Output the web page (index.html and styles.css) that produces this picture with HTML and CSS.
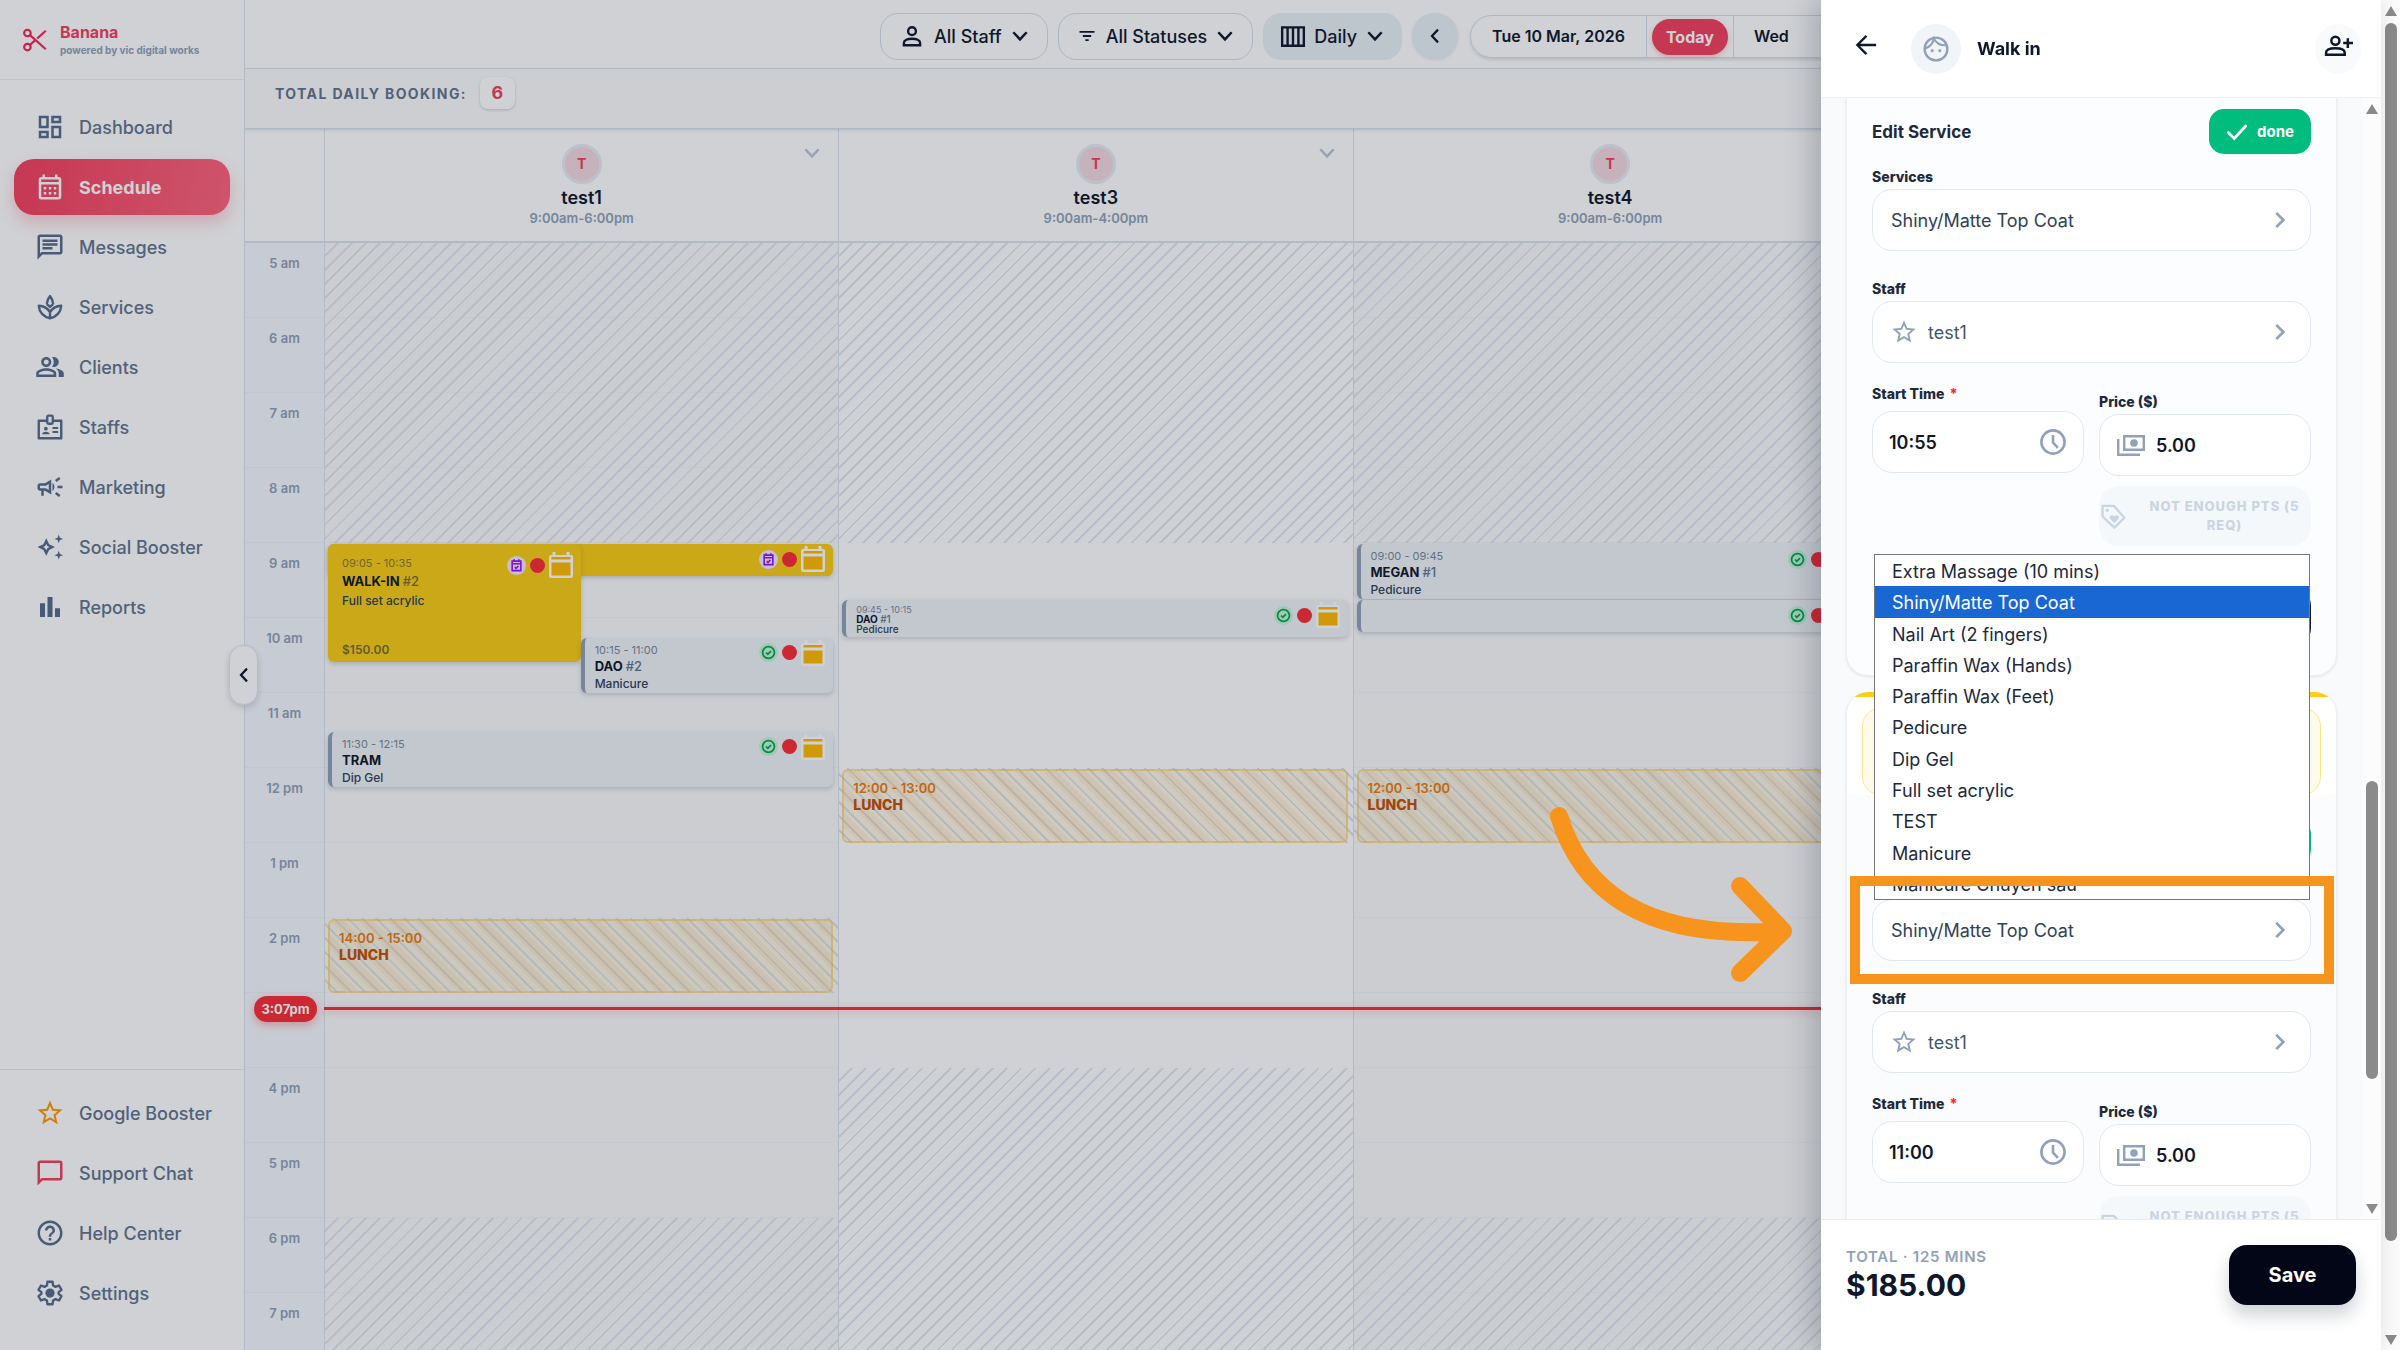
FILE: index.html
```html
<!DOCTYPE html>
<html lang="en">
<head>
  <meta charset="UTF-8" />
  <meta name="viewport" content="width=device-width, initial-scale=1.0" />
  <title>Banana - Schedule</title>
  <link rel="stylesheet" href="styles.css">
</head>
<body>

<!-- ICONS -->
<svg class="sprite" aria-hidden="true">
  <symbol id="i-scissors" viewBox="0 0 24 24"><g fill="none" stroke="currentColor" stroke-width="2"><circle cx="5" cy="5.500" r="3"/><circle cx="5" cy="18.500" r="3"/><path d="M7.400 7.500 22 20.500M7.400 16.500l4.400-3.900M14 10.600l8-7.100"/></g></symbol>
  <symbol id="i-dashboard" viewBox="0 0 24 24"><path d="M19 5v2h-4V5h4M9 5v6H5V5h4m10 8v6h-4v-6h4M9 17v2H5v-2h4M21 3h-8v6h8V3zM11 3H3v10h8V3zm10 8h-8v10h8V11zm-10 4H3v6h8v-6z"/></symbol>
  <symbol id="i-calendar" viewBox="0 0 24 24"><path d="M19 4h-1V2h-2v2H8V2H6v2H5c-1.110 0-1.990.9-1.990 2L3 20a2 2 0 0 0 2 2h14c1.100 0 2-.9 2-2V6c0-1.100-.9-2-2-2zm0 16H5V10h14v10zm0-12H5V6h14v2zM9 14H7v-2h2v2zm4 0h-2v-2h2v2zm4 0h-2v-2h2v2zm-8 4H7v-2h2v2zm4 0h-2v-2h2v2zm4 0h-2v-2h2v2z"/></symbol>
  <symbol id="i-messages" viewBox="0 0 24 24"><path d="M4 4h16v12H5.170L4 17.170V4m0-2c-1.100 0-1.990.9-1.990 2L2 22l4-4h14c1.100 0 2-.9 2-2V4c0-1.100-.9-2-2-2H4zm2 10h8v2H6v-2zm0-3h12v2H6V9zm0-3h12v2H6V6z"/></symbol>
  <symbol id="i-spa" viewBox="0 0 24 24"><g fill="none" stroke="currentColor" stroke-width="1.900" stroke-linejoin="round"><path d="M9.400 9.800C9.600 7.200 10.500 5 12 3.300c1.500 1.700 2.400 3.900 2.600 6.500M12 21c5.200-1 8.700-5 9-10-4 .2-7.200 2-9 5.200C10.200 13 7 11.200 3 11c.3 5 3.800 9 9 10zM12 21v-5M9.400 9.800c1 .6 1.800 1.300 2.600 2.100.8-.8 1.600-1.500 2.600-2.100"/></g></symbol>
  <symbol id="i-clients" viewBox="0 0 24 24"><path d="M16.670 13.130C18.040 14.060 19 15.320 19 17v3h4v-3c0-2.180-3.570-3.470-6.330-3.870zM15 12c2.210 0 4-1.790 4-4s-1.790-4-4-4c-.47 0-.91.1-1.330.24C14.500 5.270 15 6.580 15 8s-.5 2.730-1.330 3.760c.42.14.86.24 1.330.24zM9 12c2.210 0 4-1.790 4-4s-1.790-4-4-4-4 1.790-4 4 1.790 4 4 4zm0-6c1.100 0 2 .9 2 2s-.9 2-2 2-2-.9-2-2 .9-2 2-2zm0 7c-2.670 0-8 1.340-8 4v3h16v-3c0-2.660-5.330-4-8-4zm6 5H3v-.99C3.200 16.290 6.300 15 9 15s5.800 1.290 6 2v1z"/></symbol>
  <symbol id="i-badge" viewBox="0 0 24 24"><g fill="none" stroke="currentColor" stroke-width="1.900"><path d="M9.500 7H3v14h18V7h-6.500" stroke-linejoin="round"/><rect x="9.800" y="2.900" width="4.400" height="6.500" rx="1"/></g><circle cx="8.700" cy="13.300" r="1.500"/><path d="M5.700 17.800c0-1.400 1.200-2.100 3-2.100s3 .7 3 2.100zM14 12h4.500v1.500H14zM14 15.200h4.500v1.500H14z"/></symbol>
  <symbol id="i-campaign" viewBox="0 0 24 24"><path d="M18 11v2h4v-2h-4zm-2 6.610c.96.71 2.210 1.650 3.200 2.390.4-.53.8-1.070 1.200-1.600-.99-.74-2.240-1.680-3.200-2.400-.4.54-.8 1.080-1.200 1.610zM20.400 5.600c-.4-.53-.8-1.070-1.200-1.600-.99.74-2.240 1.680-3.200 2.400.4.530.8 1.070 1.200 1.600.96-.72 2.210-1.650 3.200-2.400zM4 9c-1.100 0-2 .9-2 2v2c0 1.100.9 2 2 2h1v4h2v-4h1l5 3V6L8 9H4zm5.030 1.710L11 9.530v4.940l-1.970-1.180-.48-.29H4v-2h4.550l.48-.29zM15.500 12c0-1.330-.58-2.530-1.500-3.350v6.690c.92-.81 1.500-2.010 1.500-3.340z"/></symbol>
  <symbol id="i-sparkle" viewBox="0 0 24 24"><path fill-rule="evenodd" d="M9 5l2.300 4.700L16 12l-4.700 2.300L9 19l-2.300-4.700L2 12l4.700-2.300zM9 9.500l-.9 1.600L6.500 12l1.600.9.9 1.600.9-1.600 1.600-.9-1.600-.9z"/><path d="M19 2l.9 2.600 2.600.9-2.600.9L19 9l-.9-2.600-2.600-.9 2.600-.9zM19 15l.9 2.600 2.600.9-2.600.9L19 22l-.9-2.600-2.600-.9 2.600-.9z"/></symbol>
  <symbol id="i-bars" viewBox="0 0 24 24"><path d="M4 9h4v11H4zM10 4h4v16h-4zM16 13h4v7h-4z"/></symbol>
  <symbol id="i-star" viewBox="0 0 24 24"><path d="M22 9.240l-7.190-.62L12 2 9.190 8.630 2 9.240l5.460 4.730L5.820 21 12 17.270 18.180 21l-1.630-7.030L22 9.240zM12 15.400l-3.760 2.270 1-4.280-3.320-2.880 4.380-.38L12 6.100l1.710 4.040 4.380.38-3.320 2.880 1 4.280L12 15.400z"/></symbol>
  <symbol id="i-bubble" viewBox="0 0 24 24"><path d="M20 2H4c-1.100 0-2 .9-2 2v18l4-4h14c1.100 0 2-.9 2-2V4c0-1.100-.9-2-2-2zm0 14H5.200L4 17.200V4h16v12z"/></symbol>
  <symbol id="i-help" viewBox="0 0 24 24"><path d="M11 18h2v-2h-2v2zm1-16C6.480 2 2 6.480 2 12s4.480 10 10 10 10-4.480 10-10S17.520 2 12 2zm0 18c-4.410 0-8-3.590-8-8s3.590-8 8-8 8 3.590 8 8-3.590 8-8 8zm0-14c-2.210 0-4 1.790-4 4h2c0-1.100.9-2 2-2s2 .9 2 2c0 2-3 1.750-3 5h2c0-2.250 3-2.500 3-5 0-2.210-1.790-4-4-4z"/></symbol>
  <symbol id="i-gear" viewBox="0 0 24 24"><path fill="none" stroke="currentColor" stroke-width="1.900" stroke-linejoin="round" d="M10 3h4l.5 3 1.900 1.100 2.800-1.100 2 3.500-2.300 1.800v1.400l2.300 1.800-2 3.500-2.800-1.100-1.900 1.100-.5 3h-4l-.5-3-1.900-1.100L4.800 18l-2-3.500 2.300-1.800v-1.400L2.800 9.500l2-3.500 2.800 1.100L9.500 6z"/><circle cx="12" cy="12" r="3.700"/></symbol>
  <symbol id="i-person" viewBox="0 0 24 24"><g fill="none" stroke="currentColor" stroke-width="2.200"><circle cx="12" cy="7.500" r="3.600"/><path d="M4.500 20.500v-2c0-2.600 3.500-4 7.500-4s7.500 1.400 7.500 4v2z"/></g></symbol>
  <symbol id="i-person-add" viewBox="0 0 28 24"><g fill="none" stroke="currentColor" stroke-width="2.400"><circle cx="11" cy="7" r="3.900"/><path d="M2 20.500v-2c0-2.800 4-4.300 9-4.300s9 1.500 9 4.300v2zM23 4.500v9.500M18.500 9.200h9.500"/></g></symbol>
  <symbol id="i-filter" viewBox="0 0 24 24"><path fill="none" stroke="currentColor" stroke-width="2.200" d="M3 7h18M7 12h10M10 17h4"/></symbol>
  <symbol id="i-columns" viewBox="0 0 24 24"><path fill="none" stroke="currentColor" stroke-width="2.200" d="M2 4h20v17H2zM7 4v17M12 4v17M17 4v17"/></symbol>
  <symbol id="i-down" viewBox="0 0 24 24"><path fill="none" stroke="currentColor" stroke-width="3" d="M4 7.500l8 8.500 8-8.500"/></symbol>
  <symbol id="i-left" viewBox="0 0 24 24"><path fill="none" stroke="currentColor" stroke-width="3" d="M16 3.500L8 12l8 8.500"/></symbol>
  <symbol id="i-right" viewBox="0 0 24 24"><path fill="none" stroke="currentColor" stroke-width="3.200" d="M7.500 3.500L16 12l-8.500 8.500"/></symbol>
  <symbol id="i-back" viewBox="0 0 24 24"><path fill="none" stroke="currentColor" stroke-width="2.500" d="M23 12H3M12.500 2L2.500 12l10 10"/></symbol>
  <symbol id="i-face" viewBox="0 0 24 24"><circle cx="12" cy="12" r="10.500" fill="none" stroke="currentColor" stroke-width="2.200"/><path fill="none" stroke="currentColor" stroke-width="2" d="M2 11.500C6.500 10 9 7 10 2.500c2.500 4.500 6.500 6.500 12 6"/><circle cx="8.500" cy="13.500" r="1.400"/><circle cx="15.500" cy="13.500" r="1.400"/></symbol>
  <symbol id="i-check" viewBox="0 0 24 24"><path fill="none" stroke="currentColor" stroke-width="3" stroke-linecap="round" d="M2.500 12.500l6.500 6.500L21.500 5.500"/></symbol>
  <symbol id="i-clock" viewBox="0 0 24 24"><path fill="none" stroke="currentColor" stroke-width="2.400" d="M12 1.300a10.700 10.700 0 1 0 0 21.400 10.700 10.700 0 0 0 0-21.400zM12 5.500V12.500l4.500 5"/></symbol>
  <symbol id="i-money" viewBox="0 0 28 24"><path fill="none" stroke="currentColor" stroke-width="2.400" d="M1.200 6v15.800H23M7.200 3.200h19.600v13.600H7.200z"/><circle cx="17" cy="10" r="3.800"/><path d="M6 2h4.500L6 6.500zM28 2h-4.500L28 6.500zM6 18h4.500L6 13.500zM28 18h-4.500l4.500-4.500z"/></symbol>
  <symbol id="i-tag" viewBox="0 0 24 24"><path fill="none" stroke="currentColor" stroke-width="2.200" stroke-linejoin="round" d="M1.500 1.800h10.800l10.200 11.400-9.700 9.500L1.500 12z"/><circle cx="6" cy="6" r="1.700"/><path d="M12.800 18.500l-4-4.200c-1.800-2.200 1.700-5 4-2.400 2.300-2.600 5.800.2 4 2.400z"/></symbol>
  <symbol id="i-booked" viewBox="0 0 24 24"><circle cx="12" cy="12" r="12" fill="#f3e8ff"/><path fill="none" stroke="#9810fa" stroke-width="2" d="M6.500 6.500h11v12h-11zM6.500 9.800h11M9 4v3M15 4v3M9.800 14l1.600 1.600 3-3"/></symbol>
  <symbol id="i-confirmed" viewBox="0 0 24 24"><circle cx="12" cy="12" r="12" fill="#c6f6d8"/><g fill="none" stroke="#00a651" stroke-width="2.200"><circle cx="12" cy="12" r="7.500"/><path d="M8.800 12l2.300 2.300 4-4"/></g></symbol>
  <symbol id="i-day" viewBox="0 0 24 26"><path fill="#fff" d="M3.500 0h3v3h11V0h3v3H22a2 2 0 0 1 2 2v19a2 2 0 0 1-2 2H2a2 2 0 0 1-2-2V5a2 2 0 0 1 2-2h1.500z"/><path fill="#ffb900" d="M2.500 5h19v2.500h-19zM2.500 10.500h19V23.500h-19z"/></symbol>
</svg>

<div class="app">

  <!-- SIDEBAR -->
  <aside class="sidebar">
    <div class="brand">
      <svg class="brand-icon"><use href="#i-scissors"/></svg>
      <div>
        <div class="brand-name">Banana</div>
        <div class="brand-sub">powered by vic digital works</div>
      </div>
    </div>
    <nav class="nav">
      <a href="#"><svg><use href="#i-dashboard"/></svg>Dashboard</a>
      <a href="#" class="active"><svg><use href="#i-calendar"/></svg>Schedule</a>
      <a href="#"><svg><use href="#i-messages"/></svg>Messages</a>
      <a href="#"><svg><use href="#i-spa"/></svg>Services</a>
      <a href="#"><svg><use href="#i-clients"/></svg>Clients</a>
      <a href="#"><svg><use href="#i-badge"/></svg>Staffs</a>
      <a href="#"><svg><use href="#i-campaign"/></svg>Marketing</a>
      <a href="#"><svg><use href="#i-sparkle"/></svg>Social Booster</a>
      <a href="#"><svg><use href="#i-bars"/></svg>Reports</a>
    </nav>
    <nav class="nav nav-bottom">
      <a href="#"><svg class="amber"><use href="#i-star"/></svg>Google Booster</a>
      <a href="#"><svg class="rose"><use href="#i-bubble"/></svg>Support Chat</a>
      <a href="#"><svg><use href="#i-help"/></svg>Help Center</a>
      <a href="#"><svg><use href="#i-gear"/></svg>Settings</a>
    </nav>
    <button class="collapse" aria-label="Collapse menu"><svg><use href="#i-left"/></svg></button>
  </aside>

  <!-- SCHEDULE -->
  <main class="main">
    <div class="topbar">
      <button class="filter"><svg class="ic"><use href="#i-person"/></svg>All Staff<svg class="caret"><use href="#i-down"/></svg></button>
      <button class="filter"><svg class="ic-sm"><use href="#i-filter"/></svg>All Statuses<svg class="caret"><use href="#i-down"/></svg></button>
      <button class="filter filled"><svg class="ic-lg"><use href="#i-columns"/></svg>Daily<svg class="caret"><use href="#i-down"/></svg></button>
      <button class="prev" aria-label="Previous day"><svg><use href="#i-left"/></svg></button>
      <div class="dates">
        <button class="date">Tue 10 Mar, 2026</button>
        <div class="today-wrap"><button class="today">Today</button></div>
        <button class="weekday">Wed</button>
      </div>
    </div>

    <div class="totals">
      <span>TOTAL DAILY BOOKING:</span>
      <strong>6</strong>
    </div>

    <div class="staff-head">
      <div></div>
      <div class="staff"><span class="avatar">T</span><b>test1</b><small>9:00am-6:00pm</small><svg><use href="#i-down"/></svg></div>
      <div class="staff"><span class="avatar">T</span><b>test3</b><small>9:00am-4:00pm</small><svg><use href="#i-down"/></svg></div>
      <div class="staff"><span class="avatar">T</span><b>test4</b><small>9:00am-6:00pm</small><svg><use href="#i-down"/></svg></div>
      <div class="staff"></div>
    </div>

    <div class="calendar">
      <div class="hours">
        <span>5 am</span><span>6 am</span><span>7 am</span><span>8 am</span><span>9 am</span>
        <span>10 am</span><span>11 am</span><span>12 pm</span><span>1 pm</span><span>2 pm</span>
        <span></span><span>4 pm</span><span>5 pm</span><span>6 pm</span><span>7 pm</span>
      </div>

      <!-- every grid row is 5 minutes, row 1 = 5:00 -->
      <div class="day">
        <div class="closed" style="grid-row: 1 / 49"></div>
        <div class="closed" style="grid-row: 157 / 181"></div>
        <div class="break" style="grid-row: 109 / 121"></div>
        <article class="event booked wide" style="grid-row: 49 / 52">
          <div class="flags"><svg class="badge"><use href="#i-booked"/></svg><i></i><svg class="cal"><use href="#i-day"/></svg></div>
        </article>
        <article class="event booked tall lane-1" style="grid-row: 49 / 68">
          <time>09:05 - 10:35</time>
          <h4>WALK-IN <span>#2</span></h4>
          <p>Full set acrylic</p>
          <footer>$150.00</footer>
          <div class="flags"><svg class="badge"><use href="#i-booked"/></svg><i></i><svg class="cal"><use href="#i-day"/></svg></div>
        </article>
        <article class="event lane-2" style="grid-row: 64 / 73">
          <time>10:15 - 11:00</time>
          <h4>DAO <span>#2</span></h4>
          <p>Manicure</p>
          <div class="flags"><svg class="badge"><use href="#i-confirmed"/></svg><i></i><svg class="cal"><use href="#i-day"/></svg></div>
        </article>
        <article class="event wide" style="grid-row: 79 / 88">
          <time>11:30 - 12:15</time>
          <h4>TRAM</h4>
          <p>Dip Gel</p>
          <div class="flags"><svg class="badge"><use href="#i-confirmed"/></svg><i></i><svg class="cal"><use href="#i-day"/></svg></div>
        </article>
        <article class="lunch" style="grid-row: 109 / 121"><time>14:00 - 15:00</time><b>LUNCH</b></article>
      </div>

      <div class="day">
        <div class="closed" style="grid-row: 1 / 49"></div>
        <div class="closed" style="grid-row: 133 / 181"></div>
        <div class="break" style="grid-row: 85 / 97"></div>
        <article class="event wide compact" style="grid-row: 58 / 64">
          <time>09:45 - 10:15</time>
          <h4>DAO <span>#1</span></h4>
          <p>Pedicure</p>
          <div class="flags"><svg class="badge"><use href="#i-confirmed"/></svg><i></i><svg class="cal"><use href="#i-day"/></svg></div>
        </article>
        <article class="lunch" style="grid-row: 85 / 97"><time>12:00 - 13:00</time><b>LUNCH</b></article>
      </div>

      <div class="day">
        <div class="closed" style="grid-row: 1 / 49"></div>
        <div class="closed" style="grid-row: 157 / 181"></div>
        <div class="break" style="grid-row: 85 / 97"></div>
        <article class="event wide" style="grid-row: 49 / 58">
          <time>09:00 - 09:45</time>
          <h4>MEGAN <span>#1</span></h4>
          <p>Pedicure</p>
          <div class="flags"><svg class="badge"><use href="#i-confirmed"/></svg><i></i><svg class="cal"><use href="#i-day"/></svg></div>
        </article>
        <article class="event wide" style="grid-row: 58 / 61">
          <div class="flags"><svg class="badge"><use href="#i-confirmed"/></svg><i></i><svg class="cal"><use href="#i-day"/></svg></div>
        </article>
        <article class="lunch" style="grid-row: 85 / 97"><time>12:00 - 13:00</time><b>LUNCH</b></article>
      </div>

      <div class="day"></div>

      <div class="now"><span>3:07pm</span></div>
    </div>
  </main>

  <div class="scrollbar page-scroll"><span class="up"></span><span class="thumb"></span><span class="down"></span></div>
</div>

<div class="overlay"></div>

<!-- BOOKING PANEL -->
<section class="panel">
  <header class="panel-head">
    <button class="back" aria-label="Back"><svg><use href="#i-back"/></svg></button>
    <span class="face"><svg><use href="#i-face"/></svg></span>
    <h3>Walk in</h3>
    <button class="add-client" aria-label="Add client"><svg><use href="#i-person-add"/></svg></button>
  </header>

  <div class="panel-body">
    <div class="panel-list">
      <form class="card card-first">
        <div class="edit">
          <div class="card-top"><h4>Edit Service</h4><button type="button" class="done"><svg><use href="#i-check"/></svg>done</button></div>
          <div class="field">
            <label for="service1">Services</label>
            <div class="control"><select id="service1"><option>Shiny/Matte Top Coat</option></select><svg class="go"><use href="#i-right"/></svg></div>
          </div>
          <div class="field">
            <label for="staff1">Staff</label>
            <div class="control muted"><svg class="lead"><use href="#i-star"/></svg><select id="staff1"><option>test1</option></select><svg class="go"><use href="#i-right"/></svg></div>
          </div>
          <div class="pair">
            <div class="field start">
              <label for="time1">Start Time <em>*</em></label>
              <div class="control bold"><input id="time1" type="text" value="10:55"><svg class="clock"><use href="#i-clock"/></svg></div>
            </div>
            <div class="field price">
              <label for="price1">Price ($)</label>
              <div class="control bold"><svg class="money"><use href="#i-money"/></svg><input id="price1" type="text" value="5.00"></div>
              <button type="button" class="points" disabled><svg><use href="#i-tag"/></svg><span>NOT ENOUGH PTS (5 REQ)</span></button>
            </div>
          </div>
          <button type="button" class="add-more" aria-label="Add service"></button>
        </div>
      </form>

      <form class="card card-second">
        <div class="notice"></div>
        <div class="edit">
          <div class="card-top"><h4></h4><button type="button" class="done" aria-label="done"></button></div>
          <div class="field service-again">
            <div class="control"><select id="service2" aria-label="Services"><option>Shiny/Matte Top Coat</option></select><svg class="go"><use href="#i-right"/></svg></div>
          </div>
          <div class="field">
            <label for="staff2">Staff</label>
            <div class="control muted"><svg class="lead"><use href="#i-star"/></svg><select id="staff2"><option>test1</option></select><svg class="go"><use href="#i-right"/></svg></div>
          </div>
          <div class="pair">
            <div class="field start">
              <label for="time2">Start Time <em>*</em></label>
              <div class="control bold"><input id="time2" type="text" value="11:00"><svg class="clock"><use href="#i-clock"/></svg></div>
            </div>
            <div class="field price">
              <label for="price2">Price ($)</label>
              <div class="control bold"><svg class="money"><use href="#i-money"/></svg><input id="price2" type="text" value="5.00"></div>
              <button type="button" class="points" disabled><svg><use href="#i-tag"/></svg><span>NOT ENOUGH PTS (5 REQ)</span></button>
            </div>
          </div>
        </div>
      </form>
    </div>
    <div class="scrollbar body-scroll"><span class="up"></span><span class="thumb"></span><span class="down"></span></div>

    <!-- open service list -->
    <ul class="options" role="listbox" aria-label="Services">
      <li role="option">Extra Massage (10 mins)</li>
      <li role="option" aria-selected="true">Shiny/Matte Top Coat</li>
      <li role="option">Nail Art (2 fingers)</li>
      <li role="option">Paraffin Wax (Hands)</li>
      <li role="option">Paraffin Wax (Feet)</li>
      <li role="option">Pedicure</li>
      <li role="option">Dip Gel</li>
      <li role="option">Full set acrylic</li>
      <li role="option">TEST</li>
      <li role="option">Manicure</li>
      <li role="option">Manicure Chuyên sâu</li>
    </ul>
    <div class="highlight"></div>
  </div>

  <footer class="panel-foot">
    <div>
      <div class="total-label">TOTAL · 125 MINS</div>
      <div class="total">$185.00</div>
    </div>
    <button class="save">Save</button>
  </footer>

  <svg class="pointer" viewBox="0 0 260 190"><path d="M18 23C40 95 100 148 242 138M199 93l43 45-43 42"/></svg>
</section>

</body>
</html>
```
FILE: styles.css
```css
* {
  box-sizing: border-box;
}
body {
  margin: 0;
  height: 100vh;
  overflow: hidden;
  font-family: Inter, "Noto Sans", sans-serif;
  font-size: 18px;
  color: #0f172b;
  background: #fff;
}
h3, h4, p, ul {
  margin: 0;
  padding: 0;
}
button, input, select {
  font: inherit;
  color: inherit;
  border: 0;
  background: none;
  padding: 0;
}
svg {
  fill: currentColor;
  flex: none;
  overflow: visible;
}
.sprite {
  position: absolute;
  width: 0;
  height: 0;
}
.app {
  display: flex;
  height: 100vh;
}

/* sidebar */
.sidebar {
  position: relative;
  z-index: 3;
  flex: 0 0 245px;
  display: flex;
  flex-direction: column;
  border-right: 1px solid #dbe3ed;
  background: #fff;
}
.brand {
  display: flex;
  align-items: center;
  gap: 12px;
  height: 80px;
  padding-left: 22px;
  border-bottom: 1px solid #e6edf5;
}
.brand-icon { width: 26px; height: 28px; color: #ff2056; }
.brand-name {
  font-size: 16px;
  line-height: 20px;
  font-weight: 700;
  color: #f43f5e;
}
.brand-sub {
  font-size: 10px;
  line-height: 16px;
  font-weight: 700;
  color: #90a1b9;
}
.nav {
  display: flex;
  flex-direction: column;
  gap: 4px;
  padding: 19px 14px;
}
.nav a {
  display: flex;
  align-items: center;
  gap: 14px;
  height: 56px;
  padding-left: 21px;
  border-radius: 20px;
  color: #62748e;
  font-weight: 500;
  text-decoration: none;
}
.nav svg { width: 30px; height: 30px; color: #566b8c; }
.nav .active {
  background: linear-gradient(100deg, #f43f5e, #ff637e);
  color: #fff;
  font-weight: 700;
  box-shadow: 0 8px 16px rgba(244, 63, 94, 0.25);
}
.nav .active svg { color: #fff; }
.nav .amber { color: #fe9a00; }
.nav .rose { color: #f43f5e; }
.nav-bottom {
  margin-top: auto;
  padding: 15px 14px 29px;
  border-top: 1px solid #e2e8f0;
}
.collapse {
  position: absolute;
  right: -14px;
  top: 50%;
  display: grid;
  place-items: center;
  width: 29px;
  height: 60px;
  margin-top: -30px;
  border: 1px solid #e2e8f0;
  border-radius: 14px;
  background: #fff;
  box-shadow: 0 3px 6px rgba(15, 23, 42, 0.15);
}
.collapse svg { width: 18px; height: 18px; }

/* top */
.main {
  flex: 1;
  min-width: 0;
  overflow: hidden;
}
.topbar {
  display: flex;
  align-items: center;
  gap: 10px;
  height: 69px;
  padding: 4px 0 0 635px;
  border-bottom: 1px solid #e2e8f0;
  font-weight: 500;
}
.filter {
  display: flex;
  align-items: center;
  gap: 8px;
  height: 47px;
  padding: 0 17px;
  border: 1px solid #d5dee9;
  border-radius: 18px;
  white-space: nowrap;
}
.filled {
  border-color: #e9f0f7;
  background: #e9f0f7;
  padding: 0 16px;
}
.ic { width: 28px; height: 26px; }
.ic-sm { width: 22px; height: 20px; }
.ic-lg { width: 26px; height: 28px; }
.caret { width: 20px; height: 20px; }
.prev {
  display: grid;
  place-items: center;
  width: 46px;
  height: 46px;
  border-radius: 23px;
  background: #e9f0f7;
  box-shadow: 0 1px 3px rgba(15, 23, 42, 0.1);
}
.prev svg { width: 18px; height: 18px; }
.dates {
  display: flex;
  align-items: stretch;
  flex: 1;
  height: 43px;
  margin-left: 2px;
  border: 1px solid #d5dee9;
  border-radius: 22px;
  box-shadow: 0 2px 3px rgba(15, 23, 42, 0.12);
  font-size: 16px;
  font-weight: 600;
}
.date { padding: 0 21px; }
.today-wrap {
  padding: 3px 5px;
  border: solid #d5dee9;
  border-width: 0 1px;
}
.today {
  height: 36px;
  padding: 0 14px;
  border-radius: 18px;
  background: #f43f5e;
  color: #fff;
  font-weight: 700;
  box-shadow: 0 2px 4px rgba(244, 63, 94, 0.3);
}
.weekday { padding: 0 20px; }
.totals {
  position: relative;
  z-index: 2;
  display: flex;
  align-items: center;
  gap: 13px;
  height: 60px;
  padding: 0 0 11px 30px;
  border-bottom: 1px solid #d5dee9;
  background: #fcfcfd;
  box-shadow: 0 1px 3px rgba(15, 23, 42, 0.15);
}
.totals span {
  font-size: 14px;
  font-weight: 700;
  letter-spacing: 0.1em;
  color: #62748e;
}
.totals strong {
  width: 35px;
  line-height: 32px;
  border-radius: 8px;
  background: #fff;
  box-shadow: 0 1px 3px rgba(15, 23, 42, 0.2);
  color: #f43f5e;
  text-align: center;
}

/* calendar */
.staff-head, .calendar {
  display: grid;
  grid-template-columns: 79px repeat(4, 1fr);
}
.staff-head {
  height: 114px;
  border-bottom: 2px solid #dbe3ed;
}
.staff {
  position: relative;
  display: flex;
  flex-direction: column;
  align-items: center;
  padding-top: 15px;
  border-left: 1px solid #dbe3ed;
}
.staff b {
  margin-top: 3px;
  line-height: 22px;
  font-weight: 600;
}
.staff small {
  font-size: 13px;
  line-height: 18px;
  font-weight: 600;
  color: #90a1b9;
}
.staff > svg {
  position: absolute;
  top: 14px;
  right: 16px;
  width: 20px;
  height: 20px;
  color: #b8c6da;
}
.avatar {
  width: 40px;
  height: 40px;
  border: 3px solid #e7edf4;
  border-radius: 50%;
  background: #f3d9e0;
  color: #f43f5e;
  font-size: 14px;
  line-height: 34px;
  font-weight: 700;
  text-align: center;
}
.calendar {
  position: relative;
}
.hours {
  display: grid;
  grid-auto-rows: 75px;
  background: #f5f8fe;
}
.hours span {
  padding-top: 11px;
  border-bottom: 1px solid #eef2f8;
  font-size: 13px;
  line-height: 18px;
  font-weight: 600;
  color: #90a1b9;
  text-align: center;
}
.day {
  display: grid;
  grid-template-rows: repeat(180, minmax(0, 1fr));
  grid-template-columns: 3px 1fr 1fr 5px;
  height: 1125px;
  border-left: 1px solid #dbe3ed;
  background: #fff;
}
.day:nth-child(even) {
  background: repeating-linear-gradient(transparent 0 74px, #f4f6f9 74px 75px), #fafbfc;
}
.closed, .break {
  grid-column: 1 / -1;
}
.closed {
  background: repeating-linear-gradient(135deg, transparent 0 8px, #e2e8f0 8px 10px);
}
.break {
  background: repeating-linear-gradient(45deg, transparent 0 8px, #dde3ea 8px 10px);
}
.event {
  position: relative;
  align-self: stretch;
  display: flex;
  flex-direction: column;
  min-height: 32px;
  margin-top: 1px;
  padding: 5px 10px 0;
  border-left: 4px solid #90a1b9;
  border-radius: 6px;
  background: #f0f4f8;
  box-shadow: 0 2px 5px rgba(15, 23, 42, 0.18);
  font-size: 13px;
}
.wide { grid-column: 2 / 4; }
.lane-1 { grid-column: 2; }
.lane-2 { grid-column: 3; }
.event time {
  font-size: 11px;
  line-height: 14px;
  color: #7b8799;
}
.event h4 {
  font-size: 13px;
  line-height: 18px;
  font-weight: 700;
}
.event h4 span {
  font-weight: 500;
  color: #62748e;
}
.event p {
  font-size: 12px;
  line-height: 17px;
  font-weight: 500;
  color: #314158;
}
.booked {
  border-color: #facc15;
  background: #facc15;
}
.tall { padding-top: 11px; }
.tall time { line-height: 16px; color: #8b7a30; }
.tall h4, .tall p { line-height: 20px; }
.tall h4 span { color: #7c6c2e; }
.tall footer {
  margin-top: auto;
  padding-bottom: 3px;
  font-size: 12px;
  line-height: 18px;
  font-weight: 600;
  color: #7c6c2e;
}
.flags {
  position: absolute;
  top: 2px;
  right: 8px;
  display: flex;
  align-items: center;
  gap: 4px;
}
.tall .flags { top: 8px; }
.flags i {
  width: 15px;
  height: 15px;
  border-radius: 50%;
  background: #fb2c36;
}
.flags .badge { width: 19px; height: 19px; }
.flags .cal { width: 24px; height: 26px; }
.compact time {
  font-size: 9px;
  line-height: 9px;
}
.compact h4 {
  font-size: 10px;
  line-height: 10px;
}
.compact p {
  font-size: 10px;
  line-height: 11px;
}
.lunch {
  grid-column: 2 / 4;
  display: flex;
  flex-direction: column;
  margin-top: 1px;
  padding: 9px;
  border: 2px solid rgba(255, 200, 70, 0.5);
  border-radius: 6px;
  background: repeating-linear-gradient(45deg, rgba(254, 220, 150, 0.2) 0 10px, rgba(255, 200, 120, 0.3) 10px 20px);
  font-size: 14px;
  color: #c2500a;
}
.lunch time {
  font-size: 13px;
  line-height: 16px;
  font-weight: 600;
  color: #ea7c0c;
}
.lunch b {
  line-height: 17px;
  font-weight: 800;
}
.now {
  position: absolute;
  top: 764px;
  left: 79px;
  right: 0;
  height: 3px;
  background: #fb2c36;
  box-shadow: 0 2px 8px rgba(251, 44, 54, 0.35);
}
.now span {
  position: absolute;
  left: -70px;
  top: -11px;
  width: 63px;
  border-radius: 13px;
  background: #fb2c36;
  box-shadow: 0 3px 8px rgba(251, 44, 54, 0.35);
  color: #fff;
  font-size: 13px;
  line-height: 26px;
  font-weight: 700;
  text-align: center;
}
.overlay {
  position: fixed;
  inset: 0;
  z-index: 5;
  background: rgba(15, 23, 42, 0.2);
}

/* scrollbars */
.scrollbar {
  position: relative;
  flex: 0 0 19px;
  display: flex;
  flex-direction: column;
  align-items: center;
  padding: 6px 0 5px;
  background: #fcfcfc;
}
.page-scroll { z-index: 6; }
.thumb {
  width: 12px;
  border-radius: 6px;
  background: #8b8b8b;
}
.up, .down {
  border: 6px solid transparent;
  border-top: 0;
  border-bottom: 10px solid #8b8b8b;
}
.down {
  border-top: 10px solid #8b8b8b;
  border-bottom: 0;
  margin-top: auto;
}
.page-scroll .thumb {
  margin-top: 7px;
  height: 91%;
}
.body-scroll .thumb {
  margin-top: 667px;
  height: 298px;
}

/* panel */
.panel {
  position: fixed;
  top: 0;
  bottom: 0;
  right: 19px;
  z-index: 7;
  display: flex;
  flex-direction: column;
  width: 560px;
  background: #fff;
  box-shadow: -8px 0 28px rgba(15, 23, 42, 0.22);
}
.panel-head {
  display: flex;
  align-items: center;
  height: 98px;
  padding: 0 20px 0 34px;
  border-bottom: 1px solid #eef1f5;
}
.back svg { display: block; width: 22px; height: 22px; margin-bottom: 8px; }
.face {
  display: grid;
  place-items: center;
  width: 50px;
  height: 50px;
  margin-left: 34px;
  border-radius: 50%;
  background: #f1f5f9;
  color: #90a1b9;
}
.face svg { width: 26px; height: 26px; }
.panel-head h3 {
  margin-left: 16px;
  font-size: 18px;
  font-weight: 700;
}
.add-client {
  display: grid;
  place-items: center;
  width: 46px;
  height: 50px;
  margin-left: auto;
  padding-bottom: 6px;
  border-radius: 50%;
  background: #f8fafc;
}
.add-client svg { width: 29px; height: 26px; }
.panel-body {
  position: relative;
  flex: 1;
  min-height: 0;
  display: flex;
}
.panel-list {
  flex: 1;
  min-width: 0;
  overflow: hidden;
  padding: 0 25px;
  background: #f9fafc;
}
.card {
  border: 1px solid #edf0f4;
  border-radius: 22px;
  background: #fcfdfe;
  box-shadow: 0 1px 3px rgba(15, 23, 42, 0.1);
}
.card-first {
  border-top: 0;
  border-radius: 0 0 22px 22px;
}
.card-second {
  overflow: hidden;
  margin-top: 16px;
  border-top: 0;
  background: #fff;
}
.card-second::before {
  content: "";
  display: block;
  height: 5px;
  background: #fccc16;
}
.notice {
  height: 87px;
  margin: 11px 15px 0;
  border: 1px solid #fde68a;
  border-radius: 18px;
  background: #fffbeb;
}
.edit {
  padding: 11px 25px 27px;
}
.card-second .edit {
  padding-top: 24px;
  background: #fbfcfe;
}
.card-top {
  display: flex;
  align-items: center;
  justify-content: space-between;
  height: 45px;
}
.card-top h4 {
  font-size: 17px;
  font-weight: 700;
  color: #1d293d;
}
.done {
  display: flex;
  align-items: center;
  justify-content: center;
  gap: 9px;
  width: 102px;
  height: 45px;
  border-radius: 15px;
  background: #00bc7d;
  color: #fff;
  font-size: 15px;
  font-weight: 700;
}
.done svg { width: 22px; height: 22px; }
.field {
  display: flex;
  flex-direction: column;
  margin-top: 14px;
  color: #1d293d;
}
.field + .field { margin-top: 29px; }
.service-again { margin-top: 35px; }
.field label {
  font-size: 14px;
  line-height: 18px;
  font-weight: 800;
  margin-bottom: 3px;
}
.field em {
  margin-left: 2px;
  color: #fb2c36;
  font-style: normal;
}
.control {
  display: flex;
  align-items: center;
  height: 62px;
  padding: 0 20px 0 18px;
  border: 1px solid #e2e8f0;
  border-radius: 20px;
  background: #fff;
  color: #314158;
}
.control select {
  flex: 1;
  appearance: none;
}
.control input {
  flex: 1;
  min-width: 0;
}
.muted { color: #45556c; }
.bold {
  padding: 0 17px 0 16px;
  color: #0f172b;
  font-weight: 600;
}
.control svg { color: #90a1b9; }
.go { width: 20px; height: 20px; }
.lead { width: 28px; height: 28px; margin: 0 10px 0 -1px; }
.clock { width: 26px; height: 26px; }
.money { width: 28px; height: 24px; margin: 0 11px 0 1px; }
.pair {
  display: grid;
  grid-template-columns: repeat(2, minmax(0, 1fr));
  gap: 15px;
  margin-top: 22px;
}
.pair .field { margin-top: 0; }
.start label { margin-bottom: 8px; }
.price label { margin: 8px 0 3px; }
.points {
  display: flex;
  align-items: center;
  height: 60px;
  margin-top: 10px;
  padding: 0 9px 0 2px;
  border-radius: 20px;
  background: #f5f8fb;
  color: #cad5e2;
  font-size: 13px;
  line-height: 19px;
  font-weight: 800;
  letter-spacing: 1px;
}
.points svg { width: 25px; height: 25px; }
.points span { flex: 1; padding-left: 21px; }
.add-more {
  display: block;
  width: 102px;
  height: 62px;
  margin: 40px 0 0 auto;
  border-radius: 20px;
  background: #0f172b;
}
.options {
  position: absolute;
  top: 456px;
  left: 53px;
  right: 71px;
  display: grid;
  grid-auto-rows: 1fr;
  height: 346px;
  border: 1px solid #767676;
  background: #fff;
  color: #1d293d;
  list-style: none;
}
.options li {
  display: flex;
  align-items: center;
  padding: 2px 17px 0;
}
.options [aria-selected] {
  background: #1967d2;
  color: #fff;
}
.highlight {
  position: absolute;
  top: 778px;
  left: 29px;
  right: 47px;
  height: 108px;
  border: 10px solid #f7941d;
}
.panel-foot {
  display: flex;
  align-items: center;
  justify-content: space-between;
  height: 131px;
  padding: 0 25px 21px 25px;
  border-top: 1px solid #e8edf3;
  background: #fff;
}
.total-label {
  font-size: 15px;
  line-height: 20px;
  font-weight: 600;
  letter-spacing: 0.05em;
  color: #90a1b9;
}
.total {
  font-size: 30px;
  line-height: 36px;
  font-weight: 700;
}
.save {
  width: 127px;
  height: 60px;
  border-radius: 18px;
  background: #020617;
  color: #fff;
  font-size: 20px;
  font-weight: 700;
  box-shadow: 0 10px 18px rgba(15, 23, 42, 0.2);
}
.pointer {
  position: absolute;
  top: 793px;
  left: -280px;
  width: 260px;
  height: 190px;
  fill: none;
  stroke: #f7941d;
  stroke-width: 18px;
  stroke-linecap: round;
  stroke-linejoin: round;
}
```
